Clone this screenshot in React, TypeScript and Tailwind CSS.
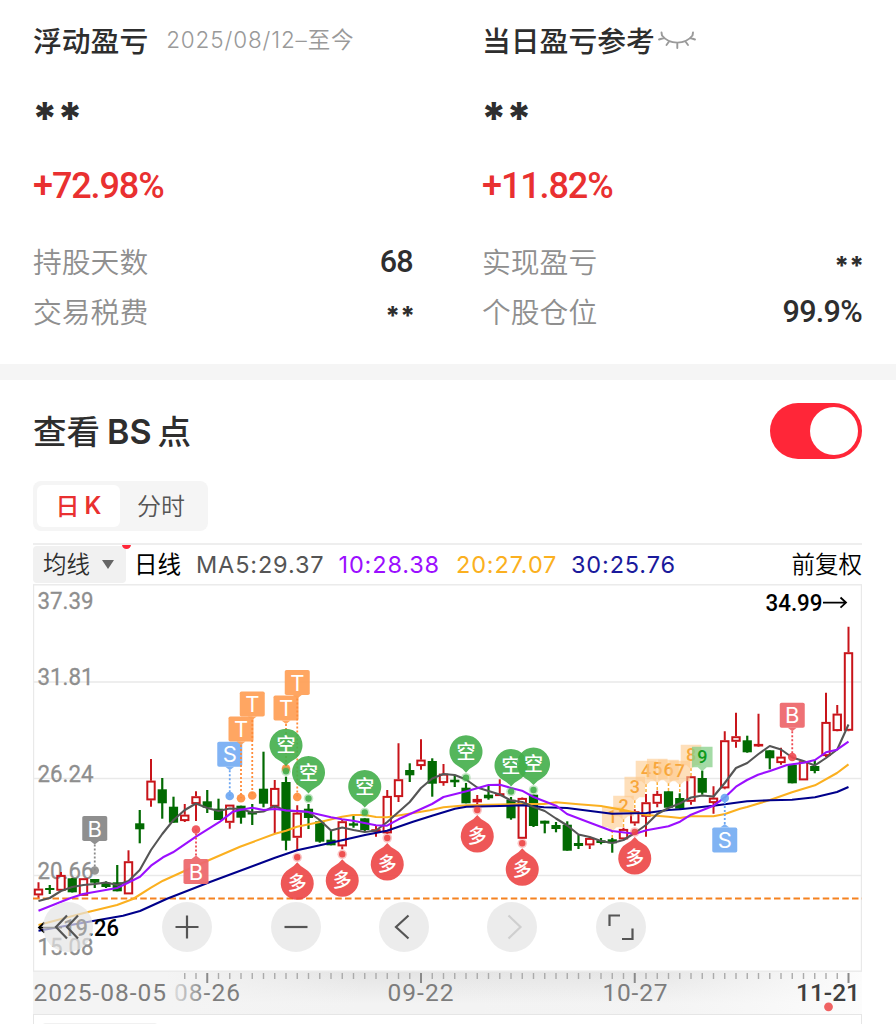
import { useState } from "react";

type Candle = [high: number, top: number, bottom: number, low: number, up: 0 | 1];
type Point = [number, number];

const FIRST_X = 38.5;
const STEP = 11.25;
const xAt = (index: number) => FIRST_X + index * STEP;

// high, body top, body bottom, low, rising
const candles: Candle[] = [
  [882.3, 888.7, 895.3, 898.7, 1], [885, 888, 890, 894, 0], [872, 875, 890.7, 891, 1], [878, 878.3, 892.3, 892.5, 0],
  [878, 878.3, 895.7, 896, 1], [879, 879, 882.7, 888, 0], [881.3, 882.7, 887, 888, 0], [865, 882.3, 891.3, 891.3, 0],
  [850.3, 861.3, 894.3, 894.3, 1], [810, 823.3, 829.3, 843.3, 0], [759, 780.7, 800.3, 806.7, 1], [778, 789.3, 803.3, 818.7, 0],
  [796.7, 806.7, 822.7, 822.7, 0], [804, 814.7, 821, 822, 1], [791.3, 796.3, 804, 821, 1], [790, 801.3, 807.7, 813, 0],
  [798.7, 808.7, 820, 820, 0], [804.7, 804.7, 822.7, 828.7, 1], [805.7, 805.7, 817.7, 823.7, 0], [804, 812, 814.5, 825, 0],
  [751.7, 788.7, 803.7, 807.3, 0], [780, 788, 806.7, 833.5, 1], [776.7, 782, 840.7, 850.3, 0], [805.3, 812.7, 837.7, 850.3, 1],
  [804, 808.7, 818, 829, 0], [820, 821.3, 841.7, 842.7, 0], [830.7, 839.7, 845.3, 845.3, 0], [820, 821.3, 846.3, 849.3, 1],
  [816, 823.3, 825.7, 827.7, 0], [818.3, 818.3, 830, 831, 0], [825, 829.3, 832, 836.7, 1], [790, 796, 833.3, 834, 1],
  [743.3, 779.3, 797, 802, 1], [763.3, 770, 775.3, 782, 0], [739.3, 759.7, 766, 769.7, 1], [758.3, 761, 783.7, 796.7, 0],
  [764, 773.7, 783, 785.7, 1], [775, 779.7, 782.3, 787, 0], [783, 787.7, 803.3, 803.3, 0], [795, 799, 802.3, 804, 1],
  [785, 794.7, 798.3, 799.7, 0], [779.3, 793.3, 796, 796, 1], [797, 799.7, 818.3, 819.7, 0], [797.5, 798, 838.7, 839, 1],
  [794.7, 794.7, 826, 827, 0], [820.7, 820.7, 823.7, 833.3, 0], [822, 825, 829, 832.3, 0], [821.3, 824.7, 850.7, 850.7, 0],
  [835, 843, 846, 849, 0], [836.7, 838, 845.3, 849, 1], [838, 840.3, 843, 844.3, 0], [838, 839.3, 843.3, 852.7, 0],
  [827.7, 829, 839.3, 839.3, 1], [809.3, 811.3, 823.3, 825.7, 1], [794, 802.3, 816.7, 836.7, 1], [790.7, 794, 803.7, 807.3, 1],
  [791.3, 791.3, 807.7, 808, 0], [793.3, 798, 808.7, 809.3, 0], [776.3, 776.3, 801.7, 804.7, 1], [770.7, 778, 792.7, 794.7, 0],
  [786.3, 797.7, 803, 813.7, 1], [731.3, 740.3, 788.3, 789.3, 1], [712.7, 736.3, 741.7, 747.7, 1], [735.7, 740.3, 752.3, 752.7, 0],
  [713.7, 744, 746, 746.7, 1], [750.3, 750.3, 758.3, 769.3, 0], [747.7, 756.7, 763, 764.7, 1], [764.7, 764.7, 783.3, 783.3, 0],
  [761.3, 761.3, 780.3, 780.3, 1], [760, 766, 771, 773.3, 0], [692.7, 722, 756, 757, 1], [705, 713.7, 731, 731.3, 1],
  [626.7, 652.3, 730.7, 731.3, 1],
];

const ma5 = [
  901, 898, 891, 887, 885, 884, 882.5, 885, 881, 870, 850, 834, 820, 810, 803.5, 808, 811, 808.5, 809, 812.5, 811.5, 806, 811, 811, 812,
  820, 830.5, 827.5, 830, 832, 830.5, 822, 812, 802, 788, 778.5, 774, 775, 779.5, 787.5, 791, 794.5, 800.5, 802, 807, 811, 818.5, 825.5,
  834.5, 837, 841, 843, 840, 833, 825, 814, 808, 803.5, 797.5, 795.5, 796.5, 783, 768, 763, 754, 746, 749.5, 757.5, 761, 765.5, 758, 749.5, 724.5,
].map((y, i): Point => [xAt(i), y]);

const ma10: Point[] = [
  [38.5, 910.7], [70, 898.3], [83, 894], [117, 888], [128, 882.7], [140, 876.7], [151, 865.7], [163, 857.3], [173, 852.3], [196, 836.7],
  [220, 821.7], [233, 811.7], [240, 810], [252, 807.7], [263.5, 810], [275, 809], [286, 810.3], [307, 811.7], [331, 817.3], [342, 819.3],
  [353, 820.7], [376, 825.3], [387, 825.7], [398.5, 819.3], [421, 809], [432, 804], [443.5, 797], [466.5, 791.3], [488.5, 785], [500, 784.7],
  [511, 788], [522, 790.7], [533.5, 797], [556, 805.7], [567, 814], [590, 822.7], [612, 831], [635, 833.7], [646.5, 830.3], [668.5, 826.3],
  [680, 821.7], [691, 814.7], [713.5, 805.7], [725, 797.3], [736, 786.7], [747, 780], [758, 774.7], [770, 771], [787, 765], [803.5, 762.7],
  [815, 760], [826, 752.3], [837, 749.7], [848.5, 741.7],
];

const ma20: Point[] = [
  [38.5, 925], [83, 913.3], [117, 905], [133, 899], [151, 887.7], [163, 880.7], [196, 865.7], [240, 846.7], [275, 833.7], [286, 830.7],
  [297, 826.7], [320, 822], [342, 816.7], [353, 815], [365, 815], [376, 817], [387, 817.3], [403, 814.7], [430, 810.3], [443.5, 807.3],
  [466.5, 805.3], [523, 804], [544, 804], [556, 802.3], [578.5, 804.3], [601, 806], [612, 808], [623.5, 810], [646.5, 815], [668.5, 816.7],
  [680, 818], [691, 816.3], [713.5, 816.3], [725, 814], [740, 808.7], [747, 807], [770, 800], [792, 792.3], [815, 785.3], [837, 773], [848.5, 764.3],
];

const ma30: Point[] = [
  [38.5, 930.7], [93, 921], [123, 915.7], [140, 911], [167, 898.7], [210, 882], [275, 857.7], [297, 850.3], [320, 845.3], [342, 840.3],
  [365, 835], [387, 830.7], [413, 821.7], [432, 815.7], [455, 808.7], [466.5, 806.7], [500, 806], [523, 805.3], [544, 807.3], [567, 808],
  [612, 813.7], [646.5, 813], [668.5, 810], [680, 809.3], [713.5, 805.7], [747, 801.3], [770, 800.3], [792, 799.7], [815, 797.3], [837, 792], [848.5, 787],
];

const averages = [
  { points: ma20, color: "#fbb020" },
  { points: ma30, color: "#00008b" },
  { points: ma5, color: "#555555" },
  { points: ma10, color: "#9b0fff" },
];

const gridLabels = [
  { label: "37.39", y: 601 },
  { label: "31.81", y: 677 },
  { label: "26.24", y: 774 },
  { label: "20.66", y: 871 },
  { label: "15.08", y: 947 },
];

// y is the centre of the box, dot the centre of the anchor
const trades = [
  { text: "B", index: 5, y: 828.5, dot: 870.5, color: "#8a8a8a", fill: "#8a8a8a" },
  { text: "B", index: 14, y: 871.5, dot: 829.5, color: "#ee4850", fill: "#ee6a6e" },
  { text: "S", index: 17, y: 754.3, dot: 796, color: "#6aa5f2", fill: "#7aaff3" },
  { text: "T", index: 18, y: 729, dot: 798.3, color: "#ff8c3a", fill: "#ffa25a" },
  { text: "T", index: 19, y: 704, dot: 795.5, color: "#ff8c3a", fill: "#ffa25a" },
  { text: "T", index: 22, y: 708, dot: 768.5, color: "#ff8c3a", fill: "#ffa25a" },
  { text: "T", index: 23, y: 682.5, dot: 797, color: "#ff8c3a", fill: "#ffa25a" },
  { text: "S", index: 61, y: 840, dot: 798, color: "#6aa5f2", fill: "#7aaff3" },
  { text: "B", index: 67, y: 715.3, dot: 757, color: "#ee4850", fill: "#ee6a6e" },
];

const shortPins = [
  { index: 22, y: 745.3 },
  { index: 24, y: 772.5 },
  { index: 29, y: 786.5 },
  { index: 38, y: 751.7 },
  { index: 42, y: 765.5 },
  { index: 44, y: 764 },
];

const longPins = [
  { index: 23, y: 883.3 },
  { index: 27, y: 880.3 },
  { index: 31, y: 864 },
  { index: 39, y: 836 },
  { index: 43, y: 869.3 },
  { index: 53, y: 858 },
];

const counts = [
  { index: 51, y: 817 },
  { index: 52, y: 806 },
  { index: 53, y: 787 },
  { index: 54, y: 771 },
  { index: 55, y: 769 },
  { index: 56, y: 770 },
  { index: 57, y: 771 },
  { index: 58, y: 755 },
  { index: 59, y: 757 },
];

const dates = [
  { label: "09-22", x: 387.5, width: 66 },
  { label: "10-27", x: 602.5, width: 65 },
];

const toPath = (points: Point[]) => points.map(([x, y], i) => `${i ? "L" : "M"}${x} ${y}`).join("");

const CandleBar = ({ candle, x }: { candle: Candle; x: number }) => {
  const [high, top, bottom, low, up] = candle;
  if (up) {
    return (
      <g stroke="#c8141a" strokeWidth="2" fill="none">
        <path d={`M${x} ${high}V${top}M${x} ${bottom}V${low}`} />
        <rect x={x - 3.7} y={top + 0.9} width="7.4" height={Math.max(bottom - top - 1.8, 0.6)} />
      </g>
    );
  }
  return (
    <g fill="#026a02">
      <rect x={x - 1.1} y={high} width="2.2" height={low - high} />
      <rect x={x - 4.6} y={top} width="9.2" height={bottom - top} />
    </g>
  );
};

const TradeMark = ({ text, index, y, dot, color, fill }: (typeof trades)[number]) => {
  const x = xAt(index);
  const dir = dot > y ? 1 : -1;
  return (
    <g>
      <path d={`M${x} ${y + dir * 16}V${dot}`} stroke={color} strokeWidth="1.8" strokeDasharray="2 2" />
      <circle cx={x} cy={dot} r="4.3" fill={color} opacity="0.9" />
      <g fill={fill} opacity="0.95">
        <rect x={x - 12.5} y={y - 12.5} width="25" height="25" rx="1.8" />
        <path d={`M${x - 4.5} ${y + dir * 12.4}h9l-4.5 ${dir * 3.6}z`} />
      </g>
      <text x={x} y={y + 8} textAnchor="middle" fill="#fff" className="font-['Inter'] text-[22px]">
        {text}
      </text>
    </g>
  );
};

const Pin = ({ text, index, y, dir, color }: { text: string; index: number; y: number; dir: 1 | -1; color: string }) => {
  const x = xAt(index);
  return (
    <g>
      <circle cx={x} cy={y + dir * 26} r="4.8" fill={color} opacity="0.3" />
      <circle cx={x} cy={y + dir * 26} r="3.2" fill={color} opacity="0.9" />
      <g fill={color} opacity="0.9">
        <path
          d={
            dir > 0
              ? `M${x - 8} ${y + 14.4}A16.5 16.5 0 1 1 ${x + 8} ${y + 14.4}Q${x + 3} ${y + 17} ${x} ${y + 21}Q${x - 3} ${y + 17} ${x - 8} ${y + 14.4}z`
              : `M${x - 8} ${y - 14.4}A16.5 16.5 0 1 0 ${x + 8} ${y - 14.4}Q${x + 3} ${y - 17} ${x} ${y - 21}Q${x - 3} ${y - 17} ${x - 8} ${y - 14.4}z`
          }
        />
      </g>
      <text
        x={x}
        y={y + 7}
        textAnchor="middle"
        fill="#fff"
        className="font-['Noto_Sans_CJK_SC',sans-serif] text-[19px] font-medium"
      >
        {text}
      </text>
    </g>
  );
};

const KLineChart = () => (
  <svg viewBox="33 584 829 388" className="block h-[388px] w-[829px] font-['Roboto',sans-serif]">
    <g stroke="#e9e9e9" strokeWidth="1.4" fill="none">
      <rect x="33.5" y="584.8" width="828" height="386.4" />
      <path d="M34 682H861M34 778.5H861M34 875.5H861" />
    </g>
    {gridLabels.map(({ label, y }) => (
      <text key={label} x="37.5" y={y + 8.4} textLength="56" lengthAdjust="spacingAndGlyphs" fill="#8e8e8e" stroke="#8e8e8e" strokeWidth="0.3" className="text-[24.5px]">
        {label}
      </text>
    ))}
    {candles.map((candle, i) => (
      <CandleBar key={i} candle={candle} x={xAt(i)} />
    ))}
    {counts.map(({ index, y }, i) => {
      const x = xAt(index);
      const last = i === 8;
      return (
        <g key={index}>
          <path d={`M${x} ${y + 13}V${candles[index][0]}`} stroke={last ? "#3fae49" : "#fbb03a"} strokeWidth="1.5" strokeDasharray="3 2" />
          <g fill={last ? "#86cf88" : "#fdc98c"} opacity={last ? 0.75 : 0.6}>
            <path d={`M${x - 10.3} ${y - 10.3}h20.6v20.6h-5.8l-4.5 4-4.5 -4h-5.8z`} />
          </g>
          <text
            x={x}
            y={y + 6.2}
            textAnchor="middle"
            fill={last ? "#0f9a1c" : "#f8a63a"}
            className="text-[18px] font-medium"
          >
            {i + 1}
          </text>
        </g>
      );
    })}
    <path d="M33 898.4H862" stroke="#f58220" strokeWidth="2" strokeDasharray="6.5 3.25" />
    {averages.map(({ points, color }) => (
      <path key={color} d={toPath(points)} fill="none" stroke={color} strokeWidth="2.1" strokeLinejoin="round" />
    ))}
    {trades.map((trade) => (
      <TradeMark key={trade.index} {...trade} />
    ))}
    {shortPins.map((pin) => (
      <Pin key={pin.index} text="空" dir={1} color="#43ae4a" {...pin} />
    ))}
    {longPins.map((pin) => (
      <Pin key={pin.index} text="多" dir={-1} color="#ec4545" {...pin} />
    ))}
    <g className="text-[24.5px] font-medium">
      <text x="765.5" y="611.4" textLength="57" lengthAdjust="spacingAndGlyphs">34.99</text>
      <path d="M823 602.6H846M840.5 597.5L846 602.6L840.5 607.7" stroke="#000" strokeWidth="1.8" fill="none" />
      <text x="63" y="936.4" textLength="56" lengthAdjust="spacingAndGlyphs">19.26</text>
      <path d="M62 927.6H39M44.5 922.5L39 927.6L44.5 932.7" stroke="#000" strokeWidth="1.8" fill="none" />
    </g>
  </svg>
);

const DateAxis = () => (
  <svg viewBox="33 972 829 42" className="block h-[42px] w-[829px] font-['Roboto',sans-serif]">
    <defs>
      <linearGradient id="shade" x1="0" y1="0" x2="0" y2="1">
        <stop offset="0" stopColor="#e4e4e4" />
        <stop offset="0.75" stopColor="#f3f3f3" />
      </linearGradient>
      <linearGradient id="edges">
        <stop offset="0.16" stopColor="#f4f4f4" />
        <stop offset="0.4" stopColor="#f4f4f4" stopOpacity="0" />
        <stop offset="0.75" stopColor="#fafafa" stopOpacity="0.1" />
        <stop offset="1" stopColor="#fcfcfc" />
      </linearGradient>
      <linearGradient id="fade" gradientUnits="userSpaceOnUse" x1="172" y1="0" x2="208" y2="0">
        <stop offset="0" stopColor="#7d7d7d" stopOpacity="0.15" />
        <stop offset="1" stopColor="#7d7d7d" />
      </linearGradient>
    </defs>
    <rect x="33" y="972" width="829" height="42" fill="url(#shade)" />
    <rect x="33" y="972" width="829" height="42" fill="url(#edges)" />
    {candles.map((_, i) => {
      if (i < 13) return null;
      const major = (i - 15) % 19 === 0;
      return (
        <rect
          key={i}
          x={xAt(i) - (major ? 1 : 0.7)}
          y="973"
          width={major ? 2 : 1.4}
          height={major ? 10 : 6}
          fill={major ? "#8a8a8a" : "#ababab"}
        />
      );
    })}
    <g fill="#7d7d7d" className="text-[24.5px]">
      <text x="33.5" y="1000.5" textLength="132.5">2025-08-05</text>
      <text x="174" y="1000.5" textLength="66" fill="url(#fade)">08-26</text>
      {dates.map(({ label, x, width }) => (
        <text key={label} x={x} y="1000.5" textLength={width}>{label}</text>
      ))}
      <text x="796" y="1000.5" textLength="64" fill="#3f3f3f" className="font-medium">11-21</text>
    </g>
    <circle cx="828.5" cy="1006.8" r="4.4" fill="#f06262" />
  </svg>
);

const ClosedEye = () => (
  <svg viewBox="0 0 40 20" className="ml-[2px] h-5 w-10" fill="none" stroke="#9a9a9a" strokeWidth="1.9" strokeLinecap="round">
    <path d="M5 5.5C12.5 15 28 15 35.5 5.500M7 8L2 9.500M5 5.500L4.500 2.500M12 11.500L9.500 15M20.300 13V18M28.500 11.500L31 15M33.500 8L38 9.500M35.500 5.500L36 2.500" />
  </svg>
);

const Stars = ({ large }: { large?: boolean }) => (
  <span
    className={
      large
        ? "relative top-[9px] -left-px font-['Inter'] text-[44px] leading-none font-extrabold tracking-[-0.5px]"
        : "relative top-[4.5px] left-[2px] font-['Inter'] text-[25.5px] leading-none font-extrabold"
    }
  >
    **
  </span>
);

const Summary = ({ title, extra, percent, rows }: { title: string; extra: React.ReactNode; percent: string; rows: string[][] }) => (
  <div className="w-[380px]">
    <div className="-mt-px flex h-[50px] items-center">
      <h2 className="text-[28.8px] leading-none font-medium">{title}</h2>
      {extra}
    </div>
    <div className="flex h-[87px] items-center">
      <Stars large />
    </div>
    <div className="mt-0.5 mb-[18px] flex h-16 items-center font-['Roboto'] text-[36px] leading-none font-medium tracking-[-1.1px] text-[#e93030]">
      {percent}
    </div>
    {rows.map(([label, value]) => (
      <div key={label} className="flex h-[50px] items-center justify-between">
        <span className="text-[28.8px] leading-none font-[350] text-[#8f8f8f]">{label}</span>
        {value === "**" ? (
          <Stars />
        ) : (
          <span className="pt-[3px] font-['Roboto'] text-[30.5px] leading-none font-medium tracking-[-0.7px]">{value}</span>
        )}
      </div>
    ))}
  </div>
);

const roundButton = "flex size-[50px] items-center justify-center rounded-full bg-[#e4e4e4]/70";

const ChartButton = ({ d, className = "", muted }: { d: string; className?: string; muted?: boolean }) => (
  <button className={`${roundButton} ${muted ? "text-[#cfcfcf]" : "text-[#555]"} ${className}`}>
    <svg viewBox="0 0 50 50" className="size-full" fill="none" stroke="currentColor" strokeWidth="2.2">
      <path d={d} />
    </svg>
  </button>
);

const App = () => {
  const [showPoints, setShowPoints] = useState(true);

  return (
    <div className="h-[1024px] w-[896px] overflow-hidden bg-white font-['Noto_Sans_CJK_SC',sans-serif] text-[#2e2e2e]">
      <section className="flex h-[364px] justify-between pt-4 pr-[34px] pl-[33px]">
        <Summary
          title="浮动盈亏"
          extra={
            <span className="ml-[18px] font-['Inter','Noto_Sans_CJK_SC',sans-serif] text-[22.5px] leading-none font-[350] tracking-[0.85px] text-[#999]">
              2025/08/12–至今
            </span>
          }
          percent="+72.98%"
          rows={[["持股天数", "68"], ["交易税费", "**"]]}
        />
        <Summary title="当日盈亏参考" extra={<ClosedEye />} percent="+11.82%" rows={[["实现盈亏", "**"], ["个股仓位", "99.9%"]]} />
      </section>

      <div className="h-4 bg-[#f5f5f5]" />

      <section className="pr-[34px] pl-[33px]">
        <div className="flex h-[101px] items-center justify-between">
          <h2 className="flex items-center gap-[7px] text-[33.5px] leading-none font-medium">
            <span className="-mt-px">查看</span>
            <span className="mt-[2px] font-['Inter'] text-[34px] font-semibold">BS</span>
            <span className="-mt-px -ml-px">点</span>
          </h2>
          <button
            onClick={() => setShowPoints(!showPoints)}
            className={`flex h-14 w-[92px] items-center rounded-full px-1 ${showPoints ? "justify-end bg-[#ff2638]" : "bg-gray-300"}`}
          >
            <span className="size-12 rounded-full bg-white" />
          </button>
        </div>

        <div className="flex h-[50px] w-[175px] rounded-lg bg-[#f5f5f5] p-1 text-[24px] leading-none">
          <button className="flex w-[83px] items-center justify-center gap-[5px] rounded-md bg-white pb-0.5 font-medium text-[#e93030]">
            日<span className="mt-[2px] font-['Inter'] font-semibold">K</span>
          </button>
          <button className="flex flex-1 items-center justify-center pr-0.5 pb-0.5 font-[350] text-[#555]">分时</button>
        </div>

        <div className="relative mt-3 flex h-[41px] items-center overflow-hidden border-t-2 border-[#eeeeee] text-[23.5px] leading-none whitespace-nowrap">
          <button className="flex h-[37px] w-[93px] items-center gap-3 rounded bg-[#f1f1f1] pb-px pl-[10px] font-[350]">
            均线
            <span className="h-0 w-0 border-x-[6.5px] border-t-[9px] border-x-transparent border-t-[#666]" />
          </button>
          <span className="absolute -top-[5px] left-[89px] size-[9px] rounded-full bg-[#ff2638]" />
          <span className="-mt-0.5 ml-[8px] w-[62px] text-black">日线</span>
          <div className="flex font-['Inter'] text-[23.5px] tracking-[0.85px]">
            <span className="w-[142.5px] text-[#555]">MA5:29.37</span>
            <span className="w-[117.5px] text-[#9b0fff]">10:28.38</span>
            <span className="w-[115px] text-[#fbb020]">20:27.07</span>
            <span className="text-[#1a1a9c]">30:25.76</span>
          </div>
          <span className="-mt-0.5 ml-auto font-[350] text-black">前复权</span>
        </div>

        <div className="relative">
          <KLineChart />
          <div className="absolute top-[318px] left-[10px] flex">
            <ChartButton className="mr-[69px]" d="M24 13.5L13 25L24 36.5M35 13.5L24 25L35 36.5" />
            <ChartButton className="mr-[58.5px]" d="M13.5 25H36.5M25 13.5V36.5" />
            <ChartButton className="mr-[58.5px]" d="M13.5 25H36.5" />
            <ChartButton className="mr-[58px]" d="M29.5 13.5L17 25L29.5 36.5" />
            <ChartButton className="mr-[58.5px]" muted d="M21.5 13.5L33.5 25L21.5 36.5" />
            <ChartButton d="M13.5 24V13.5H24M26 37H36.5V26.5" />
          </div>
        </div>
        <DateAxis />
        <div className="h-[10px] border border-b-0 border-[#e6e6e6] px-2 pt-2">
          <div className="h-1 w-[116px] rounded-t bg-[#f1f1f1]" />
        </div>
      </section>
    </div>
  );
};

export default App;
